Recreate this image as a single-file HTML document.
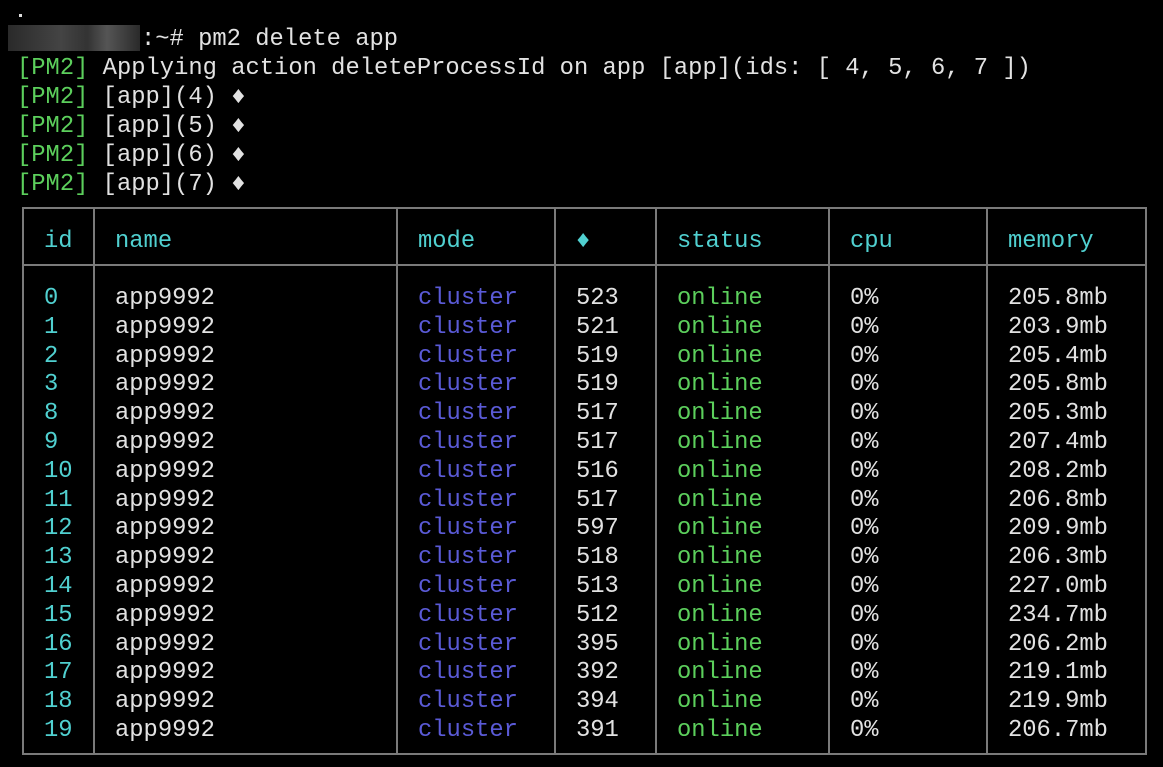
<!DOCTYPE html>
<html><head><meta charset="utf-8"><style>
body{margin:0;width:1163px;height:767px;background:#000;overflow:hidden;position:relative;font-family:"Liberation Mono","DejaVu Sans Mono",monospace;font-size:23.8px;color:#e2e2e2}
.l{position:absolute;left:17px;white-space:pre;line-height:29px;height:29px}
.g{color:#5ccf5c}.c{color:#50d0d0}.b{color:#5a5ad6}
.t{position:absolute;left:22px;top:207px;width:1121px;height:544px;border:2px solid #7a7a7a}
.v{position:absolute;top:207px;height:546px;width:2px;background:#7a7a7a}
.h{position:absolute;left:22px;top:264px;width:1123px;height:2px;background:#7a7a7a}
.col{position:absolute;white-space:pre;line-height:28.8px}
</style></head><body>
<div style="position:absolute;left:19px;top:14px;width:3px;height:3px;background:#ddd"></div>
<div style="position:absolute;left:8px;top:25px;width:132px;height:26px;background:linear-gradient(90deg,#2a2a2a,#444 40%,#333 60%,#555 75%,#2a2a2a)"></div>
<div class="l" style="top:25px;left:141px">:~# pm2 delete app</div>
<div class="l" style="top:54px"><span class="g">[PM2]</span> Applying action deleteProcessId on app [app](ids: [ 4, 5, 6, 7 ])</div>
<div class="l" style="top:83px"><span class="g">[PM2]</span> [app](4) ♦</div>
<div class="l" style="top:112px"><span class="g">[PM2]</span> [app](5) ♦</div>
<div class="l" style="top:141px"><span class="g">[PM2]</span> [app](6) ♦</div>
<div class="l" style="top:170px"><span class="g">[PM2]</span> [app](7) ♦</div>
<div class="t"></div>
<div class="v" style="left:93px"></div><div class="v" style="left:396px"></div><div class="v" style="left:554px"></div><div class="v" style="left:655px"></div><div class="v" style="left:828px"></div><div class="v" style="left:986px"></div>
<div class="h"></div>
<div class="col c" style="top:228px;left:44px">id</div>
<div class="col c" style="top:228px;left:115px">name</div>
<div class="col c" style="top:228px;left:418px">mode</div>
<div class="col c" style="top:228px;left:576px">♦</div>
<div class="col c" style="top:228px;left:677px">status</div>
<div class="col c" style="top:228px;left:850px">cpu</div>
<div class="col c" style="top:228px;left:1008px">memory</div>
<div class="col c" style="top:285px;left:44px">0
1
2
3
8
9
10
11
12
13
14
15
16
17
18
19</div>
<div class="col" style="top:285px;left:115px">app9992
app9992
app9992
app9992
app9992
app9992
app9992
app9992
app9992
app9992
app9992
app9992
app9992
app9992
app9992
app9992</div>
<div class="col b" style="top:285px;left:418px">cluster
cluster
cluster
cluster
cluster
cluster
cluster
cluster
cluster
cluster
cluster
cluster
cluster
cluster
cluster
cluster</div>
<div class="col" style="top:285px;left:576px">523
521
519
519
517
517
516
517
597
518
513
512
395
392
394
391</div>
<div class="col g" style="top:285px;left:677px">online
online
online
online
online
online
online
online
online
online
online
online
online
online
online
online</div>
<div class="col" style="top:285px;left:850px">0%
0%
0%
0%
0%
0%
0%
0%
0%
0%
0%
0%
0%
0%
0%
0%</div>
<div class="col" style="top:285px;left:1008px">205.8mb
203.9mb
205.4mb
205.8mb
205.3mb
207.4mb
208.2mb
206.8mb
209.9mb
206.3mb
227.0mb
234.7mb
206.2mb
219.1mb
219.9mb
206.7mb</div>
</body></html>
